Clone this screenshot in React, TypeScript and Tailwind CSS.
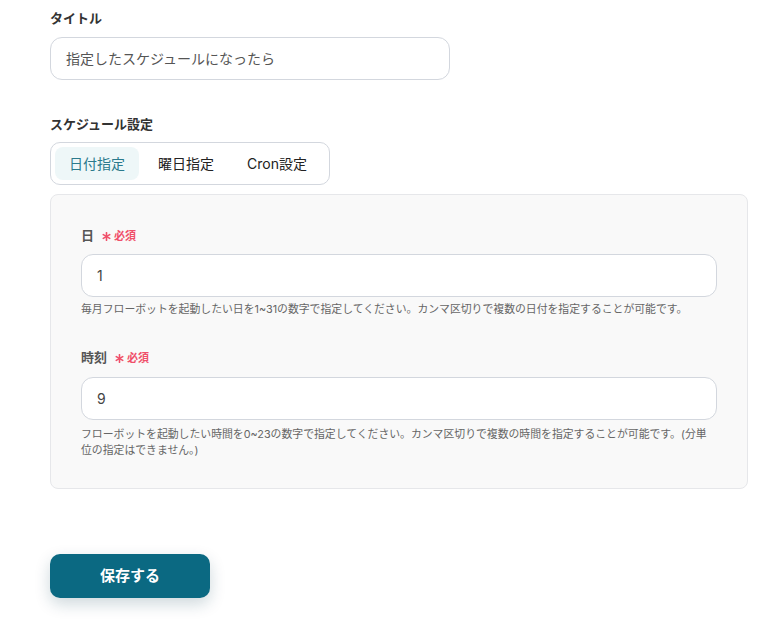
import React from "react";

const font = { fontFamily: "Inter, 'Noto Sans CJK JP', 'Noto Sans', sans-serif" };

function Required() {
  return (
    <span className="ml-[8px] inline-flex items-center text-[11px] font-bold text-[#f0506a]">
      <svg width="9" height="9" viewBox="0 0 10 10" className="mr-[3px]">
        <g stroke="#f0506a" strokeWidth="1.8" strokeLinecap="round">
          <line x1="5" y1="0.8" x2="5" y2="9.2" />
          <line x1="1.4" y1="2.9" x2="8.6" y2="7.1" />
          <line x1="1.4" y1="7.1" x2="8.6" y2="2.9" />
        </g>
      </svg>
      必須
    </span>
  );
}

export default function App() {
  return (
    <div className="min-h-[624px] w-[782px] bg-white px-[50px] pt-[8px]" style={font}>
      <div className="h-[20px] text-[13px] font-bold leading-[20px] text-[#333]">タイトル</div>
      <div className="mt-[9px] flex h-[43px] w-[400px] items-center rounded-[12px] border border-[#d3d7de] bg-white px-[15px] text-[14px] text-[#555]">
        指定したスケジュールになったら
      </div>

      <div className="mt-[34px] h-[20px] text-[13px] font-bold leading-[20px] text-[#333]">スケジュール設定</div>
      <div className="mt-[8px] flex h-[43px] w-[280px] items-center gap-[5px] rounded-[10px] border border-[#d3d7de] bg-white p-[4px]">
        <div className="flex h-[33px] shrink-0 items-center whitespace-nowrap rounded-[8px] bg-[#eef7f8] px-[14px] text-[14px] text-[#2b7a8c]">日付指定</div>
        <div className="flex h-[33px] shrink-0 items-center whitespace-nowrap rounded-[8px] px-[14px] text-[14px] text-[#222]">曜日指定</div>
        <div className="flex h-[33px] shrink-0 items-center whitespace-nowrap rounded-[8px] px-[14px] text-[14px] text-[#222]">Cron設定</div>
      </div>

      <div className="mt-[9px] w-[698px] rounded-[8px] border border-[#e6e7ea] bg-[#f9f9f9] px-[30px] pb-[30px] pt-[31px]">
        <div className="flex h-[20px] items-center text-[13px] font-bold text-[#555]">
          <span>日</span>
          <Required />
        </div>
        <div className="mt-[8px] flex h-[43px] items-center rounded-[12px] border border-[#d3d7de] bg-white px-[15px] text-[14px] text-[#444]">
          1
        </div>
        <p className="mt-[4px] text-[10.85px] leading-[16px] text-[#666]">
          毎月フローボットを起動したい日を1~31の数字で指定してください。カンマ区切りで複数の日付を指定することが可能です。
        </p>

        <div className="mt-[31px] flex h-[20px] items-center text-[13px] font-bold text-[#555]">
          <span>時刻</span>
          <Required />
        </div>
        <div className="mt-[9px] flex h-[43px] items-center rounded-[12px] border border-[#d3d7de] bg-white px-[15px] text-[14px] text-[#444]">
          9
        </div>
        <p className="mt-[6px] text-[10.85px] leading-[16px] text-[#666]">
          <span className="whitespace-nowrap">フローボットを起動したい時間を0~23の数字で指定してください。カンマ区切りで複数の時間を指定することが可能です。(分単</span>
          <br />
          位の指定はできません。)
        </p>
      </div>

      <button className="mt-[65px] flex h-[44px] w-[160px] items-center justify-center rounded-[10px] bg-[#0b6982] text-[15px] font-bold text-white shadow-[0_6px_16px_rgba(11,60,80,0.2)]">
        保存する
      </button>
    </div>
  );
}
